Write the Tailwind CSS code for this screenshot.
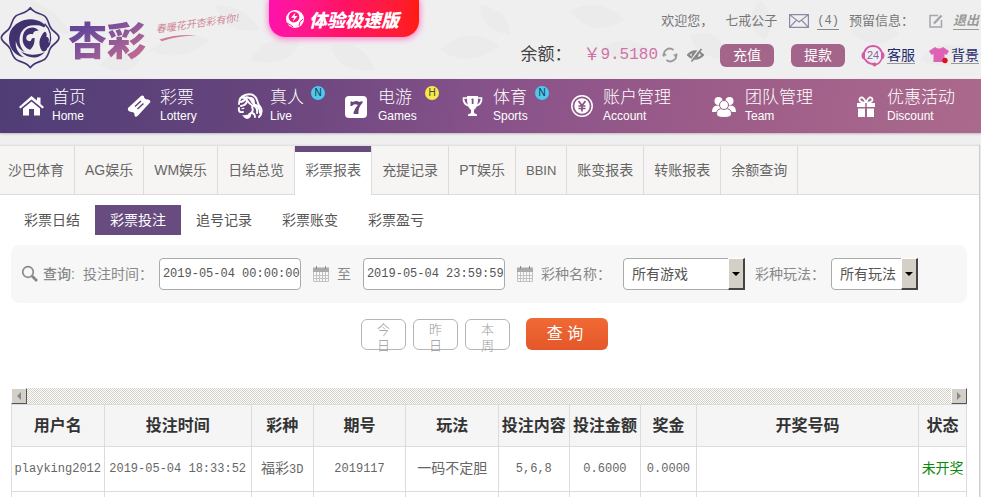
<!DOCTYPE html>
<html lang="zh-CN">
<head>
  <meta charset="UTF-8" />
  <meta name="viewport" content="width=device-width, initial-scale=1" />
  <title>杏彩 - 彩票投注</title>
  <script src="https://cdn.jsdelivr.net/npm/@tailwindcss/browser@4"></script>
</head>
<body class="font-['Liberation_Sans','Noto_Sans_CJK_SC',sans-serif] bg-[#efeff0] min-h-screen flex flex-col text-sm text-[#555] overflow-x-hidden">

  <!-- Header -->
  <header class="relative h-[79px] flex justify-between overflow-hidden">
    <!-- faint leaf pattern -->
    <svg class="absolute inset-0 w-full h-full" preserveAspectRatio="xMidYMid slice" viewBox="0 0 981 79" fill="#d9d9dc" opacity=".16" aria-hidden="true">
      <path d="M30 0q30 10 40 35q-35-5-40-35zM150 50q30-25 60-10q-30 25-60 10zM215 5q30 0 45 25q-35 5-45-25zM250 60q20-30 50-20q-10 30-50 20zM330 45q35-5 45 25q-35 5-45-25zM440 50q25-25 60-5q-30 25-60 5zM480 5q30 5 30 30q-30-5-30-30zM570 10q30-15 55 10q-35 20-55-10zM600 50q25-20 50 0q-20 20-50 0zM690 35q30-10 40 25q-35 0-40-25zM760 0q20 20 5 40q-25-15-5-40zM850 30q30-20 50 5q-30 20-50-5zM920 60q20-25 50-10q-20 25-50 10zM100 65q15-20 40-5q-15 20-40 5z"/>
    </svg>

    <a href="#" aria-label="杏彩" class="relative flex items-start pt-[6px]">
      <svg viewBox="0 0 180 190" class="w-[60px] h-[64px]" fill="none" aria-hidden="true">
        <path stroke="#453673" stroke-linejoin="round" stroke-width="5" d="M91 4C104 22 118 19 132 28C144 36 145 50 150 61C156 76 176 80 177 94C176 109 156 113 150 128C145 140 144 153 132 160C118 169 104 166 91 184C78 166 63 169 49 160C38 153 36 140 31 128C25 113 5 109 4 94C5 80 25 76 31 61C36 50 38 36 49 28C63 19 78 22 91 4Z"/>
        <!-- phoenix: wing crescent, head, tail -->
        <path fill="#41316f" d="M128 50C96 28 48 40 31 75C18 112 38 148 72 153C54 141 44 124 48 102C53 74 76 56 104 57C114 57 124 58 131 63C139 62 136 55 128 50Z"/>
        <path fill="#41316f" d="M50 72C62 54 84 47 108 51C84 56 66 67 60 88C56 106 60 124 75 137C50 130 40 96 50 72Z"/>
        <path fill="#41316f" d="M78 70C92 60 110 62 116 74C106 72 100 76 99 84C90 82 82 84 79 92C77 100 83 106 92 104L96 96L104 95C104 112 100 122 90 130C76 126 68 114 68 98C68 86 71 76 78 70Z"/>
        <path fill="#41316f" d="M120 98C124 90 126 82 134 76C141 78 141 86 139 91C147 93 149 101 145 107C152 112 149 122 142 125C141 133 133 138 126 134C119 124 116 110 120 98Z"/>
        <path fill="#41316f" d="M62 135C84 149 112 148 134 137C120 158 84 161 62 135Z"/>
        <path stroke="#41316f" stroke-width="4" d="M134 52C152 70 156 92 148 116"/>
      </svg>
      <span class="ml-2 mt-[9px] text-[39px] leading-[46px] font-black font-['Noto_Sans_CJK_SC',sans-serif] bg-linear-to-br from-[#66469a] to-[#cf6f90] from-25% bg-clip-text text-transparent">杏彩</span>
      <span class="ml-[10px] mt-[9px] -rotate-8 text-[10px] leading-4 italic text-[#cf8795] font-['Noto_Sans_CJK_SC',sans-serif]">
        春暖花开杏彩有你!
        <svg viewBox="0 0 40 6" class="w-10 h-1.5" aria-hidden="true"><path d="M2 3Q20 0 39 4Q18 2 4 5Z" fill="#cf7c94"/></svg>
      </span>
    </a>

    <a href="#" class="absolute top-0 left-[269px] w-[150px] h-[37px] rounded-b-2xl bg-linear-to-r from-[#ff10ac] via-[#ff1264] to-[#ff1c0c] shadow-[0_1px_6px_1px_#ff7ac8] flex items-center gap-1 pl-4 text-white">
      <svg viewBox="0 0 20 20" class="w-5 h-5" aria-hidden="true">
        <circle cx="10" cy="10" r="9" fill="#fff"/>
        <circle cx="9" cy="8" r="5.4" fill="#ff1488"/>
        <path d="M10.5 3.500L6 8.800h3L8 12.500l4.500-5.500H9.500Z" fill="#fff"/>
        <path d="M2 14q4 2 6 4M18 10q-4 2-4 7" stroke="#ff1488" fill="none"/>
      </svg>
      <span class="text-lg font-black italic whitespace-nowrap font-['Noto_Sans_CJK_SC',sans-serif]">体验极速版</span>
    </a>

    <div class="relative flex flex-col items-end shrink-0 whitespace-nowrap">
      <div class="flex items-center h-5 mt-[11px] pr-0.5 text-[13px] text-[#777]">
        <span>欢迎您，</span>
        <span class="ml-3">七戒公子</span>
        <svg viewBox="0 0 20 14" class="ml-3 w-5 h-3.5" fill="none" stroke="#8a8aa5" stroke-width="1.200" aria-hidden="true"><path d="M.6.600h18.800v12.800H.6ZM.6.600L10 8L19.400.600M.6 13.400L7.500 6M19.400 13.400L12.500 6"/></svg>
        <a href="#" class="ml-2 leading-4 border-b border-[#888] font-['Liberation_Mono',monospace] text-xs">(4)</a>
        <span class="ml-[10px]">预留信息：</span>
        <a href="#" aria-label="编辑" class="ml-[15px]">
          <svg viewBox="0 0 14 14" class="w-3.5 h-3.5" fill="none" stroke="#a5a5ae" stroke-width="1.500" aria-hidden="true"><path d="M9 1.500H1v11.500h11.500V6"/><path d="M5 9.500L12.500 1.500" stroke-width="2.500"/></svg>
        </a>
        <a href="#" class="ml-[10px] leading-4 font-bold italic text-[#999] border-b border-[#999]">退出</a>
      </div>
      <div class="flex items-center h-6 mt-3 pr-0.5">
        <span class="text-[17px] text-[#444]">余额：</span>
        <span class="ml-3 text-[17px] text-[#cf73a6] flex items-center">￥<span class="font-['Liberation_Mono',monospace] text-base">9.5180</span></span>
        <button type="button" aria-label="刷新" class="ml-1">
          <svg viewBox="0 0 16 16" class="w-4 h-4" fill="none" stroke="#999" stroke-width="1.800" aria-hidden="true"><path d="M2 9.500A6 6 0 0 1 11.500 3M14 6.500A6 6 0 0 1 4.500 13"/><path d="M0 8.500h5L2.500 5.500ZM11 7.500h5L13.500 10.500Z" fill="#999" stroke="none"/></svg>
        </button>
        <button type="button" aria-label="隐藏余额" class="ml-[9px]">
          <svg viewBox="0 0 17 16" class="w-[17px] h-4" fill="none" stroke="#888" stroke-width="2" aria-hidden="true"><path d="M1 8Q8 .500 16 8Q8.500 15.500 1 8Z"/><circle cx="8" cy="8" r="3.500" fill="#888" stroke="none"/><path d="M13 1L3 15" stroke="#eee" stroke-width="1.500"/><path d="M14.500 2L4.500 14.500" stroke-width="1.800"/></svg>
        </button>
        <button type="button" class="ml-4 w-[54px] h-[23px] rounded-md bg-[#a4658b] text-white leading-5">充值</button>
        <button type="button" class="ml-[17px] w-[54px] h-[23px] rounded-md bg-[#a4658b] text-white leading-5">提款</button>
        <a href="#" class="ml-4 flex items-center gap-0.5 text-[#1d2a6b]">
          <svg viewBox="0 0 24 24" class="w-6 h-6" fill="none" stroke="#d45aa6" aria-hidden="true">
            <path d="M3.500 9A9 9 0 0 1 20.500 9M4 16A9.500 9.500 0 0 0 12 21" stroke-width="2"/>
            <path d="M20.500 16Q19 20.500 15 21.500" stroke-width="1.500"/>
            <path d="M4 8Q.500 9 .500 12.500Q.500 16 4 17ZM20 8Q23.500 9 23.500 12.500Q23.500 16 20 17Z" fill="#d45aa6" stroke="none"/>
            <circle cx="13.500" cy="21.500" r="2" fill="#d45aa6" stroke="none"/>
            <text x="12" y="16" text-anchor="middle" font-size="11" font-family="Liberation Sans" fill="#8f5fa5" stroke="none">24</text>
          </svg>
          <span class="leading-4 border-b border-[#999]">客服</span>
        </a>
        <a href="#" class="ml-[14px] flex items-center gap-0.5 text-[#1d2a6b]">
          <svg viewBox="0 0 20 18" class="w-5 h-[18px]" aria-hidden="true"><path d="M6 1Q10 4 14 1L20 5L17.500 9L15.500 8V16H4.500V8L2.500 9L0 5Z" fill="#dd62b5"/><circle cx="16" cy="14.500" r="2.700" fill="#e0101c"/></svg>
          <span class="leading-4 border-b border-[#999]">背景</span>
        </a>
      </div>
    </div>
  </header>

  <!-- Main navigation -->
  <nav class="h-[54px] pl-[19px] grid grid-cols-[108fr_110fr_108fr_115fr_110fr_142fr_142fr_127fr] items-center bg-linear-[100deg,#4f3d76,#66447c_25%,#87528a_50%,#9c5c89_72%,#ab6a8c] text-white whitespace-nowrap shadow-[0_1px_2px_#bbb]">
    <a href="#" class="flex items-center gap-[7px]">
      <svg viewBox="0 0 26 26" class="w-[26px] h-[26px]" fill="#fff" aria-hidden="true"><path d="M12.500 3L0 14l1.500 1.500L12.500 6.500L23.500 15.500L25 14L21.500 11V4.500H18V7.500Z"/><path d="M4 15.500L12.500 8.500L21 15.500V22.500H15V16H10V22.500H4Z"/></svg>
      <span><span class="block text-[17px] leading-5 font-light">首页</span><span class="block text-xs leading-4">Home</span></span>
    </a>
    <a href="#" class="flex items-center gap-[7px]">
      <svg viewBox="0 0 26 26" class="w-[26px] h-[26px]" aria-hidden="true"><path d="M1 15L14 3Q16 2 17 3.500Q17 6 20.500 6.500Q23 6 23.500 9L11 22.500Q8.500 25 7.500 22.500Q8 19 4.500 19Q0 18.500 1 15Z" fill="#fff"/><path d="M9.500 16.500l6-5.500M12 19l6-5.500" stroke="#61437c" stroke-width="1.500" transform="translate(-1.500 -3)"/></svg>
      <span><span class="block text-[17px] leading-5 font-light">彩票</span><span class="block text-xs leading-4">Lottery</span></span>
    </a>
    <a href="#" class="relative flex items-center gap-[7px]">
      <svg viewBox="0 0 26 26" class="w-[26px] h-[26px]" fill="none" stroke="#fff" stroke-width="1.900" stroke-linecap="round" aria-hidden="true">
        <path d="M2 11Q2 4 8 2Q17-1 20 7Q21 12 24 15Q26 20 22 24M4 13Q10 12 10 7Q13 12 17 13Q21 15 20 20M6 5Q12 3 14 7Q16 11 19 12Q23 15 23 20M4 9Q8 8 10 4M2 15Q1 20 6 19M15 14Q17 18 14 20Q18 20 18 24M12 5Q17 4 17 10"/>
        <path d="M5 22Q9 23 14 20Q15 25 10 26Q7 25 5 22ZM4 16q2-2 4-1q-2 2-4 1Z" fill="#fff" stroke="none"/>
      </svg>
      <span><span class="block text-[17px] leading-5 font-light">真人</span><span class="block text-xs leading-4">Live</span></span>
      <span class="absolute left-[74px] -top-0.5 w-3.5 h-3.5 rounded-full bg-[#4cc9ec] text-[#1f3350] text-[10px] leading-3.5 text-center">N</span>
    </a>
    <a href="#" class="relative flex items-center gap-[7px]">
      <svg viewBox="0 0 26 26" class="w-[26px] h-[26px]" aria-hidden="true"><rect x="0" y="3" width="22" height="22" rx="4" fill="#fff"/><path d="M5.500 8.500H7L8 9Q12 7 14 9L17.500 8V10Q13 14 13.500 21H8.500Q9 16 13 12Q9 10 7 13H5.500Z" fill="#6a457d"/></svg>
      <span><span class="block text-[17px] leading-5 font-light">电游</span><span class="block text-xs leading-4">Games</span></span>
      <span class="absolute left-[80px] -top-0.5 w-3.5 h-3.5 rounded-full bg-[#f7e948] text-[#444] text-[10px] leading-3.5 text-center">H</span>
    </a>
    <a href="#" class="relative flex items-center gap-[7px]">
      <svg viewBox="0 0 26 26" class="w-[26px] h-[26px]" fill="#fff" aria-hidden="true"><path d="M7 3H18Q18.500 14 14 17V20L17 21.500V23H8V21.500L11 20V17Q6.500 14 7 3Z"/><path d="M7 5H3.500Q3 11 9 13M18 5h3.500Q22 11 16 13" fill="none" stroke="#fff" stroke-width="1.700"/><path d="M11 6.500L12.500 5.500H13.500V11H11.800V7Z" fill="#7d4e85"/></svg>
      <span><span class="block text-[17px] leading-5 font-light">体育</span><span class="block text-xs leading-4">Sports</span></span>
      <span class="absolute left-[75px] -top-0.5 w-3.5 h-3.5 rounded-full bg-[#4cc9ec] text-[#1f3350] text-[10px] leading-3.5 text-center">N</span>
    </a>
    <a href="#" class="flex items-center gap-[7px]">
      <svg viewBox="0 0 26 26" class="w-[26px] h-[26px]" fill="none" stroke="#fff" aria-hidden="true"><circle cx="12" cy="13" r="10.200" stroke-width="1.500"/><circle cx="12" cy="13" r="7.700" fill="#fff" stroke="none"/><path d="M8.500 8L12 12.500L15.500 8M12 12.500V18.500M8.500 13h7M8.500 15.500h7" stroke="#8a5285" stroke-width="1.700"/></svg>
      <span><span class="block text-[17px] leading-5 font-light">账户管理</span><span class="block text-xs leading-4">Account</span></span>
    </a>
    <a href="#" class="flex items-center gap-[7px]">
      <svg viewBox="0 0 26 26" class="w-[26px] h-[26px]" fill="#fff" aria-hidden="true">
        <circle cx="6.500" cy="8" r="4"/><circle cx="17.500" cy="8" r="4"/><path d="M0 19Q0 12 6 12.500Q10 12 11 19ZM24 19Q24 12 18 12.500Q14 12 13 19Z"/>
        <g stroke="#9a5b89"><path d="M4.500 21Q4.500 15 12 15.500Q19.500 15 19.500 21Q19.500 24.500 12 24.500Q4.500 24.500 4.500 21Z"/><circle cx="12" cy="12" r="4.500"/></g>
      </svg>
      <span><span class="block text-[17px] leading-5 font-light">团队管理</span><span class="block text-xs leading-4">Team</span></span>
    </a>
    <a href="#" class="flex items-center gap-[7px]">
      <svg viewBox="0 0 26 26" class="w-[26px] h-[26px]" fill="#fff" aria-hidden="true"><path d="M3 10H21V14H3ZM4 15.500H11V24H4ZM13 15.500H20V24H13Z"/><path d="M12 10Q6 9.500 5.500 7Q5.500 4 8.500 4.500Q11 6 12 10Q13 6 15.500 4.500Q18.500 4 18.500 7Q18 9.500 12 10" fill="none" stroke="#fff" stroke-width="1.800"/><path d="M12 10V24" stroke="#a46388" stroke-width="1.500"/></svg>
      <span><span class="block text-[17px] leading-5 font-light">优惠活动</span><span class="block text-xs leading-4">Discount</span></span>
    </a>
  </nav>

  <main class="mt-3 mr-0.5 flex-1 bg-white border-t border-[#e2e0e3] shadow-[1px_0_1px_#ccc]">
    <!-- Report tabs -->
    <nav class="flex h-[49px] bg-[#f6f5f3] shadow-[inset_0_-1px_0_#dcdcdc] leading-[49px] text-[#666] whitespace-nowrap">
      <a href="#" class="pl-2 pr-2.5 border-r border-[#dcdcdc]">沙巴体育</a>
      <a href="#" class="px-2.5 border-r border-[#dcdcdc]">AG娱乐</a>
      <a href="#" class="px-2.5 border-r border-[#dcdcdc]">WM娱乐</a>
      <a href="#" class="px-2.5 border-r border-[#dcdcdc]">日结总览</a>
      <a href="#" aria-current="page" class="px-2.5 border-r border-[#dcdcdc] bg-white shadow-[inset_0_6px_0_#684c80]">彩票报表</a>
      <a href="#" class="px-2.5 border-r border-[#dcdcdc]">充提记录</a>
      <a href="#" class="px-2.5 border-r border-[#dcdcdc]">PT娱乐</a>
      <a href="#" class="px-2.5 border-r border-[#dcdcdc] text-[13px]">BBIN</a>
      <a href="#" class="px-2.5 border-r border-[#dcdcdc]">账变报表</a>
      <a href="#" class="px-2.5 border-r border-[#dcdcdc]">转账报表</a>
      <a href="#" class="px-2.5 border-r border-[#dcdcdc]">余额查询</a>
    </nav>

    <nav class="flex mt-[10px] ml-[9px] leading-[30px] whitespace-nowrap">
      <a href="#" class="px-[15px]">彩票日结</a>
      <a href="#" aria-current="page" class="px-[15px] bg-[#684c80] text-white">彩票投注</a>
      <a href="#" class="px-[15px]">追号记录</a>
      <a href="#" class="px-[15px]">彩票账变</a>
      <a href="#" class="px-[15px]">彩票盈亏</a>
    </nav>

    <!-- Search form -->
    <form class="ml-[11px] mr-3 mt-[10px]">
      <div class="flex items-center h-[58px] pl-[10px] rounded-lg bg-[#f7f7f7] text-[#888] whitespace-nowrap">
        <svg viewBox="0 0 18 18" class="w-[18px] h-[18px]" fill="none" stroke="#888" aria-hidden="true"><circle cx="7" cy="7" r="5.300" stroke-width="1.700"/><path d="M11 11l5 5" stroke-width="2.800"/></svg>
        <span class="ml-1 font-medium">查询:</span>
        <label for="startTime" class="ml-2 w-[76px]">投注时间：</label>
        <input id="startTime" type="text" value="2019-05-04 00:00:00" class="w-[142px] h-8 pl-[3px] rounded-sm border border-[#aaa] bg-white font-['Liberation_Mono',monospace] text-xs text-[#555]" />
        <svg viewBox="0 0 16 16" class="ml-3 w-4 h-4" fill="none" stroke="#aaa" aria-hidden="true"><path d="M0 1.500h16V6H0Z" fill="#aaa" stroke="none"/><path d="M3.500 0v3M12.500 0v3" stroke="#888"/><path d="M.500 6V15.500H15.500V6M3.500 6v10M6.500 6v10M9.500 6v10M12.500 6v10M0 9.500h16M0 12.500h16" stroke="#c2c2c2"/></svg>
        <label for="endTime" class="ml-2 w-[26px]">至</label>
        <input id="endTime" type="text" value="2019-05-04 23:59:59" class="w-[142px] h-8 pl-[3px] rounded-sm border border-[#aaa] bg-white font-['Liberation_Mono',monospace] text-xs text-[#555]" />
        <svg viewBox="0 0 16 16" class="ml-3 w-4 h-4" fill="none" stroke="#aaa" aria-hidden="true"><path d="M0 1.500h16V6H0Z" fill="#aaa" stroke="none"/><path d="M3.500 0v3M12.500 0v3" stroke="#888"/><path d="M.500 6V15.500H15.500V6M3.500 6v10M6.500 6v10M9.500 6v10M12.500 6v10M0 9.500h16M0 12.500h16" stroke="#c2c2c2"/></svg>
        <label for="lottery" class="ml-2 w-[82px]">彩种名称：</label>
        <div class="relative w-[122px]">
          <select id="lottery" class="w-full h-8 pl-2 appearance-none rounded-sm border border-[#aaa] bg-white text-[#555]"><option>所有游戏</option></select>
          <span class="absolute right-0 top-0 w-[17px] h-8 bg-[#d4d0c8] border border-l-white border-t-white border-r-2 border-b-2 border-r-[#444] border-b-[#444] flex items-center justify-center pointer-events-none">
            <span class="border-x-4 border-t-4 border-x-transparent border-t-black"></span>
          </span>
        </div>
        <label for="playType" class="ml-2.5 w-[76px]">彩种玩法：</label>
        <div class="relative w-[87px]">
          <select id="playType" class="w-full h-8 pl-2 appearance-none rounded-sm border border-[#aaa] bg-white text-[#555]"><option>所有玩法</option></select>
          <span class="absolute right-0 top-0 w-[17px] h-8 bg-[#d4d0c8] border border-l-white border-t-white border-r-2 border-b-2 border-r-[#444] border-b-[#444] flex items-center justify-center pointer-events-none">
            <span class="border-x-4 border-t-4 border-x-transparent border-t-black"></span>
          </span>
        </div>
      </div>

      <div class="flex items-center justify-center gap-[7px] mt-[15px] pr-[9px]">
        <button type="button" class="w-[45px] h-[31px] px-3 rounded-md border border-[#b5b5b5] bg-white text-[13px] leading-4 text-[#999] font-light"><span class="block h-6">今日</span></button>
        <button type="button" class="w-[45px] h-[31px] px-3 rounded-md border border-[#b5b5b5] bg-white text-[13px] leading-4 text-[#999] font-light"><span class="block h-6">昨日</span></button>
        <button type="button" class="w-[45px] h-[31px] px-3 rounded-md border border-[#b5b5b5] bg-white text-[13px] leading-4 text-[#999] font-light"><span class="block h-6">本周</span></button>
        <button type="submit" class="ml-[9px] w-[82px] h-8 rounded-md bg-linear-to-b from-[#f06a35] to-[#e4572a] text-white text-base pr-1">查 询</button>
      </div>
    </form>

    <!-- Bet records -->
    <section class="ml-[11px] mr-3 mt-[38px]">
      <div class="flex justify-between h-4 bg-[repeating-conic-gradient(#d4d0c8_0_25%,#fff_0_50%)] bg-[length:2px_2px]">
        <button type="button" aria-label="向左滚动" class="w-4 h-4 bg-[#d4d0c8] border border-l-white border-t-white border-r-[#555] border-b-[#555] flex items-center justify-center"><span class="border-y-4 border-r-4 border-y-transparent border-r-[#888]"></span></button>
        <button type="button" aria-label="向右滚动" class="w-4 h-4 bg-[#d4d0c8] border border-l-white border-t-white border-r-[#555] border-b-[#555] flex items-center justify-center"><span class="border-y-4 border-l-4 border-y-transparent border-l-[#888]"></span></button>
      </div>
      <table class="w-full table-fixed border-collapse text-center whitespace-nowrap [&_th]:border [&_td]:border-x [&_td]:border-t [&_th]:border-[#dcdcdc] [&_td]:border-[#dcdcdc]">
        <colgroup>
          <col class="w-[9.7%]" /><col class="w-[15.4%]" /><col class="w-[6.5%]" /><col class="w-[9.7%]" /><col class="w-[9.7%]" />
          <col class="w-[7.4%]" /><col class="w-[7.5%]" /><col class="w-[5.8%]" /><col /><col class="w-[5%]" />
        </colgroup>
        <thead>
          <tr class="h-[42px] bg-[#f5f5f5] text-base text-[#333]">
            <th>用户名</th><th>投注时间</th><th>彩种</th><th>期号</th><th>玩法</th><th>投注内容</th><th>投注金额</th><th>奖金</th><th>开奖号码</th><th>状态</th>
          </tr>
        </thead>
        <tbody class="font-['Liberation_Mono','Noto_Sans_CJK_SC',monospace] text-xs text-[#666]">
          <tr class="h-[45px]">
            <td>playking2012</td><td>2019-05-04 18:33:52</td><td><span class="text-sm">福彩</span>3D</td><td>2019117</td><td class="text-sm">一码不定胆</td><td>5,6,8</td><td>0.6000</td><td>0.0000</td><td></td><td class="text-sm text-[#0a8a0a]">未开奖</td>
          </tr>
          <tr class="h-[6px]">
            <td></td><td></td><td></td><td></td><td></td><td></td><td></td><td></td><td></td><td></td>
          </tr>
        </tbody>
      </table>
    </section>
  </main>
</body>
</html>
